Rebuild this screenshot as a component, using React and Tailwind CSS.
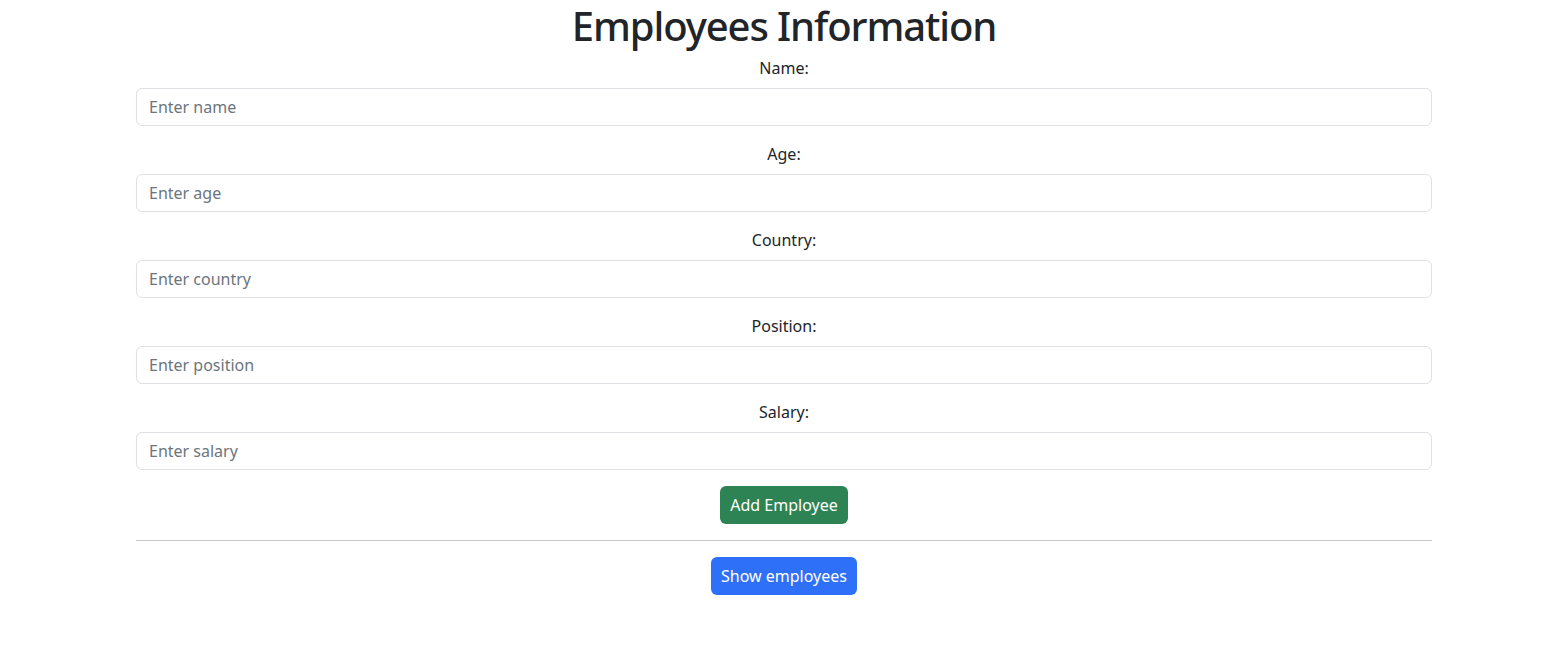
export default function App() {
  const fields = [
    { label: 'Name:', ph: 'Enter name' },
    { label: 'Age:', ph: 'Enter age' },
    { label: 'Country:', ph: 'Enter country' },
    { label: 'Position:', ph: 'Enter position' },
    { label: 'Salary:', ph: 'Enter salary' },
  ]

  return (
    <div className="min-h-screen bg-white text-[#212529] font-['Noto_Sans',sans-serif] text-base leading-6">
      <div className="mx-auto w-[1320px] pl-[13px] pr-[11px] text-center">
        <h1 className="mb-2 pt-1 text-[40px] font-medium leading-[44px] tracking-[-1.1px]">Employees Information</h1>

        {fields.map(f => (
          <div key={f.label} className="mb-4">
            <label className="mb-2 block">{f.label}</label>
            <input
              type="text"
              placeholder={f.ph}
              className="block h-[38px] w-full rounded-md border border-[#dee2e6] px-3 py-1.5 text-left placeholder:text-[#6c757d] focus:outline-none"
            />
          </div>
        ))}

        <button className="h-[38px] rounded-md bg-[#2e8354] px-2.5 text-white">Add Employee</button>

        <hr className="my-4 border-[#c8c9ca]" />

        <button className="h-[38px] rounded-md bg-[#2f70f8] px-2.5 text-white">Show employees</button>
      </div>
    </div>
  )
}
